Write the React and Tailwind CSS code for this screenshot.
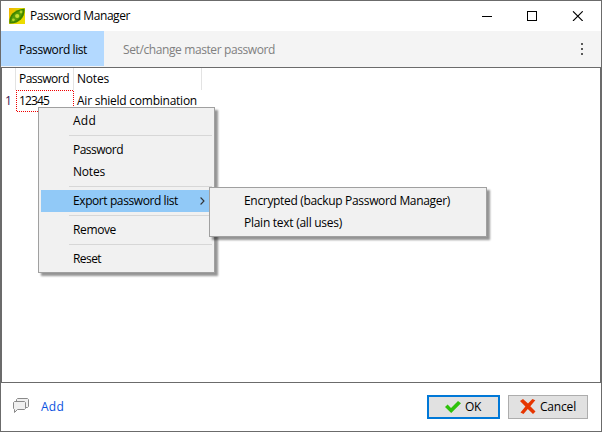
import React, { useLayoutEffect, useRef, useState } from "react";

// Single-line label whose letter spacing is fitted to a given width.
function Label({ w, children, className = "" }) {
  const ref = useRef(null);
  const [spacing, setSpacing] = useState(0);
  useLayoutEffect(() => {
    const natural = ref.current.getBoundingClientRect().width;
    setSpacing((w - natural) / children.length);
  }, []);
  return (
    <span ref={ref} className={`inline-block shrink-0 whitespace-nowrap ${className}`} style={{ letterSpacing: `${spacing}px` }}>
      {children}
    </span>
  );
}

function PeaIcon() {
  return (
    <svg width="16" height="16" viewBox="0 0 16 16" className="shrink-0">
      <defs>
        <linearGradient id="pea" x1="0" y1="0" x2="1" y2="0.6">
          <stop offset="0" stopColor="#f5b000" />
          <stop offset="0.5" stopColor="#e0d400" />
          <stop offset="1" stopColor="#ecdc00" />
        </linearGradient>
      </defs>
      <rect width="16" height="16" fill="url(#pea)" />
      <path d="M0.5 15.5C-0.5 9 3 2 15.5 0.5C16.5 8 11 16 0.5 15.5Z" fill="#3f8400" />
      <path d="M1.8 14.2C2 9 5 4 14.3 1.7C13.5 8 9 13 1.8 14.2Z" fill="#579c06" />
      <circle cx="8.2" cy="8" r="2.1" fill="#c8e030" />
      <circle cx="4.4" cy="11.8" r="1.4" fill="#b4d428" />
      <circle cx="12" cy="4" r="1.4" fill="#b4d428" />
    </svg>
  );
}

function Item({ children, w, active }) {
  return (
    <div className={`flex h-[22px] items-center pl-8 ${active ? "bg-[#91c9f7]" : ""}`}>
      <Label w={w}>{children}</Label>
      {active && (
        <svg width="5" height="8" viewBox="0 0 5 8" className="ml-auto mr-[7px]">
          <path d="M.6.5 4 4 .6 7.5" fill="none" stroke="#333" strokeWidth="1.1" />
        </svg>
      )}
    </div>
  );
}

function Separator() {
  return <div className="my-[3px] ml-7 h-px bg-[#d7d7d7]" />;
}

function Menu({ className, children }) {
  return (
    <div className={`absolute border border-[#a0a0a0] bg-[#f1f1f1] p-[2px] shadow-[3px_3px_2px_0_rgba(0,0,0,0.42)] ${className}`}>
      {children}
    </div>
  );
}

export default function App() {
  return (
    <div className="relative flex h-[432px] w-[602px] flex-col overflow-hidden border border-[#6b6b6b] bg-white font-['Open_Sans','Noto_Sans',sans-serif] text-[12px] leading-4 text-black">
      <div className="flex h-[30px] shrink-0 items-center pl-2">
        <PeaIcon />
        <Label w={100} className="ml-[5px]">Password Manager</Label>
        <svg width="101" height="10" viewBox="0 0 101 10" className="ml-auto mr-[18px]" fill="none" stroke="#000">
          <path d="M0 5.5h10M45.5 .5h9v9h-9z" shapeRendering="crispEdges" />
          <path d="M91 .3 100.7 10M100.7 .3 91 10" strokeWidth="1.1" />
        </svg>
      </div>
      <div className="flex h-9 shrink-0 bg-[#f4f4f4]">
        <div className="flex h-[35px] w-[103px] items-center bg-[#b3d9ff] pl-[18px] pt-[3px]">
          <Label w={68}>Password list</Label>
        </div>
        <div className="flex h-[35px] items-center pl-[19px] pt-[3px] text-[#808080]">
          <Label w={152}>Set/change master password</Label>
        </div>
        <div className="ml-auto mr-[18px] mt-3 flex flex-col gap-[3px]">
          <i className="size-[2px] bg-[#5a5a5a]" />
          <i className="size-[2px] bg-[#5a5a5a]" />
          <i className="size-[2px] bg-[#5a5a5a]" />
        </div>
      </div>
      <div className="h-[316px] shrink-0 border border-[#6b6b6b]">
        <div className="flex h-[22px]">
          <div className="w-[14px] shrink-0 border-r border-[#e3e3e3]" />
          <div className="flex w-[58px] items-center border-r border-[#e3e3e3] pl-[3px]">
            <Label w={50}>Password</Label>
          </div>
          <div className="flex w-32 items-center border-r border-[#e3e3e3] pl-[3px]">
            <Label w={32}>Notes</Label>
          </div>
        </div>
        <div className="flex h-[22px] items-center">
          <div className="w-[14px] shrink-0 pl-[3px] text-[#3c1250]">1</div>
          <svg width="58" height="22" className="-mr-[58px] shrink-0">
            <path d="M0 .5h58M1 21.5h57M.5 0v22M57.5 1v21" fill="none" stroke="#f00000" strokeDasharray="1 1" shapeRendering="crispEdges" />
          </svg>
          <div className="w-[58px] pl-[3px]">
            <Label w={30}>12345</Label>
          </div>
          <div className="pl-[3px]">
            <Label w={120}>Air shield combination</Label>
          </div>
        </div>
      </div>
      <div className="flex h-[47px] shrink-0 items-center">
        <svg width="17" height="15" viewBox="0 0 17 15" className="mb-[2px] ml-3 shrink-0" fill="#f0f0f0" stroke="#8a8a8a">
          <path d="M4.5 .5h10l1 1v7l-1 1h-10l-1-1v-7z" />
          <path d="M1.5 3.5h10l1 1v6l-1 1h-7l-3 3v-3l-1-1v-6z" />
        </svg>
        <Label w={23} className="ml-[11px] text-[#0a52e0]">Add</Label>
        <button className="ml-auto flex h-6 w-[73px] items-center border-2 border-[#0078d7] bg-[#e1e1e1] pl-4">
          <svg width="16" height="12" viewBox="0 0 16 12" className="shrink-0">
            <path d="M0 6 2.6 3.5 6 7 13 0 16 2.3 6.2 12z" fill="#2ec20b" />
          </svg>
          <Label w={16} className="ml-1">OK</Label>
        </button>
        <button className="ml-2 mr-[13px] flex h-6 w-20 items-center border border-[#adadad] bg-[#e1e1e1] pl-[11px]">
          <svg width="16" height="15" viewBox="0 0 16 15" className="shrink-0">
            <path d="M0 2 3 0 8 4.6 12.4 0 15.3 1.2 10.3 7.2 15.5 12.5 13 15 7.8 10 3.5 15 .5 13.5 5.4 7.5z" fill="#e63500" />
          </svg>
          <Label w={36} className="ml-1">Cancel</Label>
        </button>
      </div>

      <Menu className="left-[37px] top-[106px] w-[177px]">
        <Item w={23}>Add</Item>
        <Separator />
        <Item w={50}>Password</Item>
        <Item w={32}>Notes</Item>
        <Separator />
        <Item w={105} active>Export password list</Item>
        <Separator />
        <Item w={43}>Remove</Item>
        <Separator />
        <Item w={28}>Reset</Item>
      </Menu>
      <Menu className="left-[208px] top-[186px] w-[278px]">
        <Item w={206}>Encrypted (backup Password Manager)</Item>
        <Item w={98}>Plain text (all uses)</Item>
      </Menu>
    </div>
  );
}
